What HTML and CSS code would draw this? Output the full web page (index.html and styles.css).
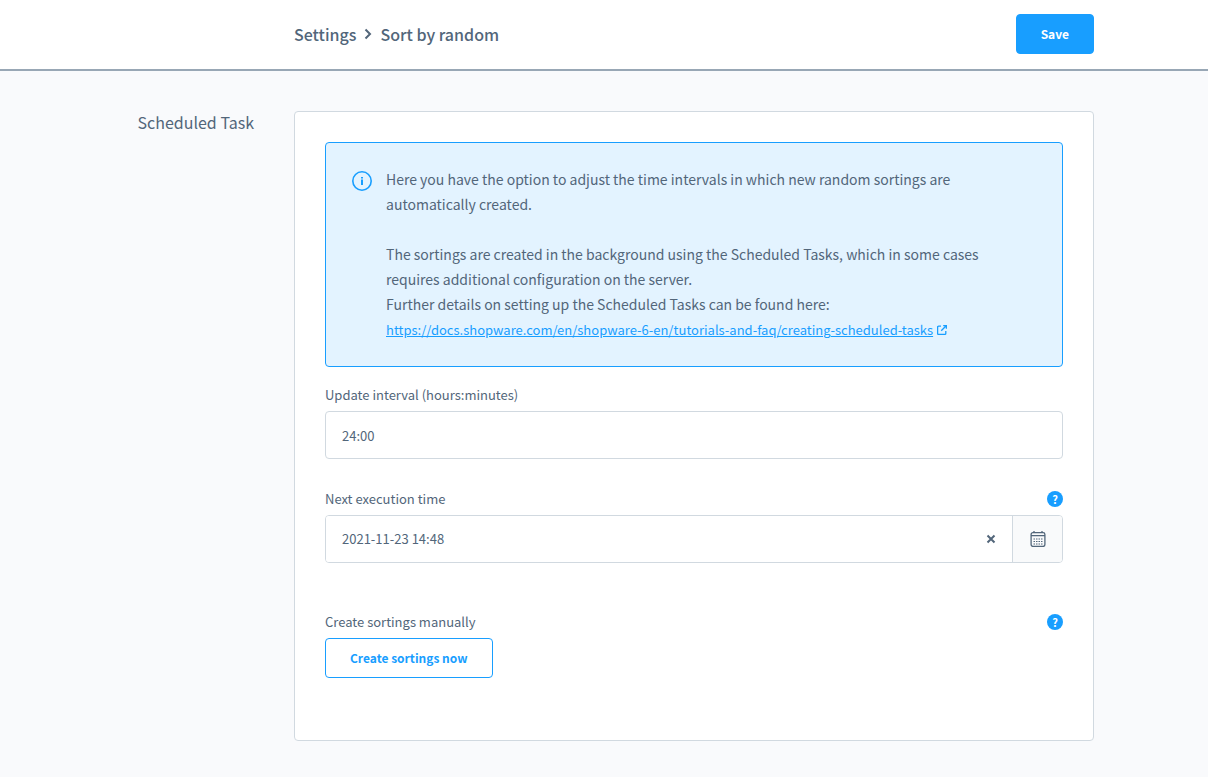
FILE: index.html
```html
<!DOCTYPE html>
<html lang="en">
<head>
<meta charset="utf-8">
<meta name="viewport" content="width=device-width, initial-scale=1">
<title>Sort by random</title>
<link rel="stylesheet" href="styles.css">
</head>
<body>
<header class="page-header">
  <div class="content-grid">
    <div class="header-bar">
      <nav class="breadcrumb" aria-label="Breadcrumb">
        <a href="#settings">Settings</a>
        <svg class="chevron" viewBox="0 0 8 12" aria-hidden="true"><path d="M1.500 1.500L6 6l-4.500 4.500"/></svg>
        <span>Sort by random</span>
      </nav>
      <button class="button button-primary" type="button">Save</button>
    </div>
  </div>
</header>
<main class="page-body">
  <div class="content-grid">
    <h2 class="section-title">Scheduled Task</h2>
    <section class="card">
      <div class="alert">
        <svg class="alert-icon" viewBox="0 0 20 20" aria-hidden="true"><circle cx="10" cy="10" r="9.200"/><path class="mark" d="M10 6v1.500M10 8.500V14"/></svg>
        <div class="alert-text">
          <p>Here you have the option to adjust the time intervals in which new random sortings are automatically created.</p>
          <p class="alert-details">The sortings are created in the background using the Scheduled Tasks, which in some cases requires additional configuration on the server.<br>Further details on setting up the Scheduled Tasks can be found here:</p>
          <a class="doc-link" href="https://docs.shopware.com/en/shopware-6-en/tutorials-and-faq/creating-scheduled-tasks"><span>https://docs.shopware.com/en/shopware-6-en/tutorials-and-faq/creating-scheduled-tasks</span><svg class="external" viewBox="0 0 10 10" aria-hidden="true"><path d="M4 1.200H1.600a1 1 0 0 0-1 1v6.200a1 1 0 0 0 1 1h6.200a1 1 0 0 0 1-1V6M6.200.6h3.200v3.200M9.200.8L4.200 5.800"/></svg></a>
        </div>
      </div>
      <div class="field">
        <div class="field-head"><label for="interval">Update interval (hours:minutes)</label></div>
        <input class="text-input" id="interval" type="text" value="24:00">
      </div>
      <div class="field field-date">
        <div class="field-head"><label for="execution">Next execution time</label><button class="help" type="button" aria-label="Help for next execution time">?</button></div>
        <div class="date-control">
          <input id="execution" type="text" value="2021-11-23 14:48">
          <button class="clear" type="button" aria-label="Clear date"><svg viewBox="0 0 10 10" aria-hidden="true"><path d="M1.500 1.500l7 7M8.500 1.500l-7 7"/></svg></button>
          <button class="calendar" type="button" aria-label="Open calendar"><svg viewBox="0 0 16 16" aria-hidden="true"><rect x="1.100" y="1.600" width="13.800" height="13.800" rx="1.800"/><path d="M1 4.600h14M4 0v2M12 0v2"/><path class="dots" d="M3.500 8h9.500M3.500 10.500h9.500M3.500 13h9.500"/></svg></button>
        </div>
      </div>
      <div class="field">
        <div class="field-head"><span>Create sortings manually</span><button class="help" type="button" aria-label="Help for creating sortings">?</button></div>
        <button class="button button-outline" type="button">Create sortings now</button>
      </div>
    </section>
  </div>
</main>
</body>
</html>
```
FILE: styles.css
```css
* { box-sizing: border-box; }
body {
  margin: 0;
  min-height: 100vh;
  background: #f9fafc;
  color: #52667a;
  font-family: "Noto Sans CJK SC", "Noto Sans", sans-serif;
  font-size: 13px;
  line-height: 24px;
}
button, input { font: inherit; color: inherit; }
button { cursor: pointer; }
p, h2 { margin: 0; }

.content-grid {
  display: grid;
  grid-template-columns: 160px minmax(0, 1fr);
  column-gap: 40px;
  max-width: 1000px;
  margin: 0 auto;
}

/* Header */
.page-header {
  padding: 14px 20px 15px 0;
  background: #fff;
  border-bottom: 2px solid #98a7b5;
}
.header-bar {
  grid-column: 2;
  display: flex;
  align-items: center;
  justify-content: space-between;
}
.breadcrumb {
  display: flex;
  align-items: center;
  gap: 8px;
  font-size: 16px;
  font-weight: 500;
}
.breadcrumb a { color: inherit; text-decoration: none; }
.chevron { width: 8px; height: 12px; fill: none; stroke: currentColor; stroke-width: 2; }

/* Buttons */
.button { height: 40px; padding: 0 24px; border-radius: 4px; font-size: 12px; font-weight: 700; }
.button-primary { background: #189eff; border: 1px solid #189eff; color: #fff; }
.button-outline { background: #fff; border: 1px solid #189eff; color: #189eff; }

/* Card */
.page-body { padding: 40px 20px 36px 0; }
.section-title { text-align: right; font-size: 16px; line-height: 22px; font-weight: 400; }
.card {
  padding: 30px 30px 34px;
  background: #fff;
  border: 1px solid #d1d9e0;
  border-radius: 4px;
}

/* Info box */
.alert {
  display: flex;
  gap: 14px;
  margin-bottom: 16px;
  padding: 24px 40px 24px 26px;
  border: 1px solid #189eff;
  border-radius: 4px;
  background: #e3f3ff;
  font-size: 14px;
  line-height: 25px;
}
.alert-text { min-width: 0; }
.alert-icon { flex: none; width: 20px; height: 20px; margin-top: 4px; fill: none; stroke: #189eff; stroke-width: 1.6; }
.alert-icon .mark { stroke-width: 2; }
.alert-details { margin-top: 25px; }
.doc-link { display: inline-flex; align-items: center; gap: 4px; color: #189eff; font-size: 13px; text-decoration: none; }
.doc-link span { min-width: 0; overflow-wrap: anywhere; text-decoration: underline; }
.external { flex: none; width: 10px; height: 10px; fill: none; stroke: currentColor; stroke-width: 1.3; }

/* Form fields */
.field { margin-bottom: 28px; }
.field-date { margin-bottom: 47px; }
.field-head { display: flex; align-items: center; justify-content: space-between; margin-bottom: 4px; }
.text-input, .date-control { width: 100%; height: 48px; border: 1px solid #d1d9e0; border-radius: 4px; background: #fff; }
.text-input { display: block; padding: 0 16px; }
.date-control { display: flex; overflow: hidden; }
.date-control input { flex: 1; min-width: 0; padding: 0 16px; border: 0; }
.help { width: 16px; height: 16px; padding: 0; border: 0; border-radius: 50%; background: #189eff; color: #fff; font-size: 11px; line-height: 16px; font-weight: 700; }
.clear, .calendar { display: flex; align-items: center; justify-content: center; padding: 0; border: 0; }
.clear { width: 42px; background: #fff; }
.clear svg { width: 10px; height: 10px; stroke: currentColor; stroke-width: 2; }
.calendar { width: 50px; border-left: 1px solid #d1d9e0; background: #f9fafb; }
.calendar svg { width: 16px; height: 16px; fill: none; stroke: currentColor; stroke-width: 1.3; }
.calendar .dots { stroke-width: 1; stroke-dasharray: 1.500 1; }
```
